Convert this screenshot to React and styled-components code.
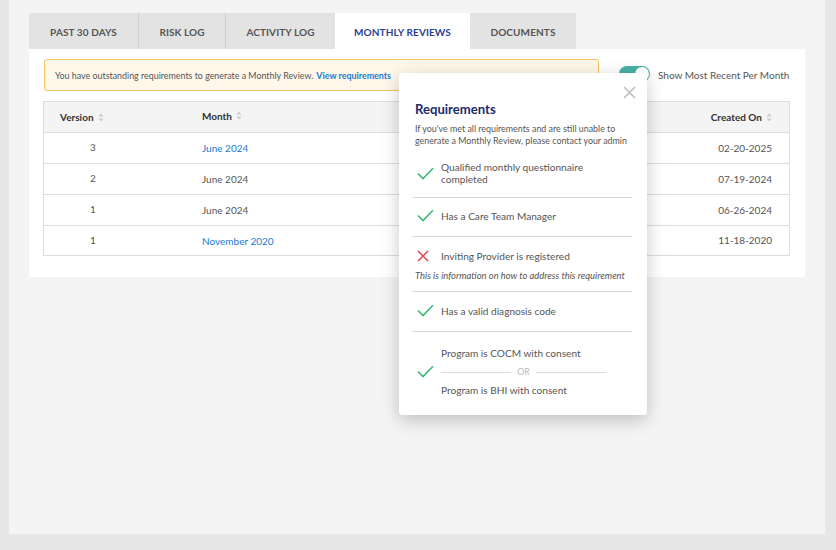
import React from "react";
import styled, { createGlobalStyle } from "styled-components";

const Global = createGlobalStyle`
  html, body { margin: 0; padding: 0; background: #e7e7e7; }
  body { font-family: Lato, "Open Sans", sans-serif; color: #555; }
  * { box-sizing: border-box; }
`;

const Page = styled.div`
  width: 836px;
  height: 550px;
  background: #e7e7e7;
  padding-left: 9px;
`;

const Panel = styled.div`
  width: 816px;
  height: 534px;
  background: #f4f4f4;
  padding: 13px 20px 0 20px;
`;

const Tabs = styled.div`
  display: flex;
  height: 36px;
`;

const Tab = styled.div`
  width: ${(p) => p.$w}px;
  display: flex;
  align-items: center;
  justify-content: center;
  font-size: 10px;
  font-weight: 700;
  letter-spacing: 0.1px;
  color: ${(p) => (p.$active ? "#2c3e94" : "#555")};
  background: ${(p) => (p.$active ? "#fff" : "#e3e3e3")};
  border-right: ${(p) => (p.$sep ? "1px solid #cfcfcf" : "none")};
  padding-top: 2px;
`;

const Card = styled.div`
  position: relative;
  width: 776px;
  background: #fff;
  padding: 10px 15px 21px 15px;
`;

const Toolbar = styled.div`
  display: flex;
  align-items: center;
  height: 32px;
`;

const Alert = styled.div`
  width: 555px;
  height: 32px;
  background: #fff7ea;
  border: 1px solid #f6c467;
  border-radius: 3px;
  display: flex;
  align-items: center;
  padding-left: 10px;
  font-size: 8.9px;
  color: #555;
`;

const Link = styled.span`
  color: #1a7ad4;
  font-weight: 700;
  margin-left: 3px;
`;

const Toggle = styled.div`
  width: 31px;
  height: 16px;
  border-radius: 8px;
  background: #46b1a5;
  margin-left: 20px;
  margin-top: -2px;
  position: relative;
  &::after {
    content: "";
    position: absolute;
    right: 1px;
    top: 1px;
    width: 14px;
    height: 14px;
    border-radius: 50%;
    background: #fff;
  }
`;

const ToggleLabel = styled.span`
  font-size: 10px;
  color: #555;
  margin-left: 8px;
`;

const Table = styled.div`
  margin-top: 10px;
  width: 747px;
  border: 1px solid #ddd;
  margin-left: -1px;
`;

const Row = styled.div`
  display: grid;
  grid-template-columns: 142px 1fr 200px;
  height: ${(p) => (p.$head ? 30 : p.$last ? 30 : 31)}px;
  align-items: center;
  background: ${(p) => (p.$head ? "#f4f4f4" : "#fff")};
  border-top: ${(p) => (p.$head ? "none" : "1px solid #ddd")};
  font-size: 10px;
  color: ${(p) => (p.$head ? "#333" : "#555")};
  font-weight: ${(p) => (p.$head ? 700 : 400)};
`;

const Cell = styled.div`
  display: flex;
  align-items: center;
  gap: 4px;
  padding-left: ${(p) => p.$pl || 0}px;
  padding-right: ${(p) => p.$pr || 0}px;
  justify-content: ${(p) => (p.$right ? "flex-end" : "flex-start")};
  color: ${(p) => (p.$link ? "#1a7ad4" : "inherit")};
  margin-top: ${(p) => p.$mt || 0}px;
`;

const SortIcon = () => (
  <svg width="6" height="9" viewBox="0 0 6 9">
    <path d="M3 0.5 L5.5 3.5 H0.5 Z" fill="#ccc" />
    <path d="M3 8.5 L5.5 5.5 H0.5 Z" fill="#ccc" />
  </svg>
);

const Popover = styled.div`
  position: absolute;
  left: 370px;
  top: 24px;
  width: 248px;
  height: 342px;
  background: #fff;
  border-radius: 3px;
  box-shadow: 0 5px 18px rgba(0, 0, 0, 0.22);
  padding: 28px 15px 0 13px;
`;

const Close = styled.div`
  position: absolute;
  right: 10px;
  top: 10px;
  width: 14px;
  height: 14px;
`;

const Title = styled.div`
  font-size: 13.1px;
  line-height: 16px;
  font-weight: 700;
  color: #1c2a6b;
  padding-left: 3px;
`;

const Sub = styled.div`
  font-size: 8.9px;
  line-height: 12px;
  color: #555;
  padding-left: 3px;
  margin-top: 6px;
  white-space: nowrap;
`;

const Item = styled.div`
  display: grid;
  grid-template-columns: 29px 1fr;
  align-items: center;
  padding: ${(p) => p.$pad || "0"};
  border-bottom: ${(p) => (p.$last ? "none" : "1px solid #d9d9d9")};
`;

const ItemText = styled.div`
  font-size: 10.1px;
  line-height: 12px;
  color: #555;
  white-space: nowrap;
`;

const Note = styled.div`
  grid-column: 1 / 3;
  font-size: 9.4px;
  line-height: 10px;
  font-style: italic;
  color: #555;
  padding-left: 3px;
  margin-top: 9px;
  white-space: nowrap;
`;

const Or = styled.div`
  display: flex;
  align-items: center;
  gap: 6px;
  width: 165px;
  margin: 8px 0 7px 0;
  font-size: 8.8px;
  line-height: 10px;
  color: #bbb;
  &::before, &::after {
    content: "";
    flex: 1;
    height: 1px;
    background: #dcdcdc;
  }
`;

const IconBox = styled.div`
  display: flex;
  align-items: center;
  padding-left: 5px;
`;

const Check = () => (
  <svg width="17" height="13" viewBox="0 0 17 13">
    <path d="M1 6.5 L6 11.5 L16 1.2" fill="none" stroke="#3cb878" strokeWidth="1.6" />
  </svg>
);

const Cross = () => (
  <svg width="12" height="12" viewBox="0 0 12 12">
    <path d="M1 1 L11 11 M11 1 L1 11" fill="none" stroke="#e2474c" strokeWidth="1.5" />
  </svg>
);

const rows = [
  ["3", "June 2024", "02-20-2025", true],
  ["2", "June 2024", "07-19-2024", false],
  ["1", "June 2024", "06-26-2024", false],
  ["1", "November 2020", "11-18-2020", true],
];

export default function App() {
  return (
    <Page>
      <Global />
      <Panel>
        <Tabs>
          <Tab $w={110} $sep>PAST 30 DAYS</Tab>
          <Tab $w={87} $sep>RISK LOG</Tab>
          <Tab $w={109}>ACTIVITY LOG</Tab>
          <Tab $w={135} $active>MONTHLY REVIEWS</Tab>
          <Tab $w={106}>DOCUMENTS</Tab>
        </Tabs>
        <Card>
          <Toolbar>
            <Alert>
              You have outstanding requirements to generate a Monthly Review.
              <Link>View requirements</Link>
            </Alert>
            <Toggle />
            <ToggleLabel>Show Most Recent Per Month</ToggleLabel>
          </Toolbar>
          <Table>
            <Row $head>
              <Cell $pl={16} $mt={0}>Version <SortIcon /></Cell>
              <Cell $pl={16} $mt={-3}>Month <SortIcon /></Cell>
              <Cell $right $pr={17} $mt={0}>Created On <SortIcon /></Cell>
            </Row>
            {rows.map(([v, m, d, link], i) => (
              <Row key={i} $last={i === rows.length - 1}>
                <Cell $pl={46} $mt={-2}>{v}</Cell>
                <Cell $pl={16} $link={link}>{m}</Cell>
                <Cell $right $pr={17} $mt={-1}>{d}</Cell>
              </Row>
            ))}
          </Table>
          <Popover>
            <Close>
              <svg width="13" height="13" viewBox="0 0 13 13">
                <path d="M1 1 L12 12 M12 1 L1 12" stroke="#bdbdbd" strokeWidth="1.6" />
              </svg>
            </Close>
            <Title>Requirements</Title>
            <Sub>
              If you've met all requirements and are still unable to
              <br />
              generate a Monthly Review, please contact your admin
            </Sub>
            <Item $pad="14px 0 12px 0">
              <IconBox><Check /></IconBox>
              <ItemText>Qualified monthly questionnaire<br />completed</ItemText>
            </Item>
            <Item $pad="11px 0 14px 0">
              <IconBox><Check /></IconBox>
              <ItemText>Has a Care Team Manager</ItemText>
            </Item>
            <Item $pad="13px 0 10px 0">
              <IconBox><Cross /></IconBox>
              <ItemText>Inviting Provider is registered</ItemText>
              <Note>This is information on how to address this requirement</Note>
            </Item>
            <Item $pad="12px 0 14px 0">
              <IconBox><Check /></IconBox>
              <ItemText>Has a valid diagnosis code</ItemText>
            </Item>
            <Item $pad="15px 0 0 0" $last>
              <IconBox><Check /></IconBox>
              <div>
                <ItemText>Program is COCM with consent</ItemText>
                <Or>OR</Or>
                <ItemText>Program is BHI with consent</ItemText>
              </div>
            </Item>
          </Popover>
        </Card>
      </Panel>
    </Page>
  );
}
